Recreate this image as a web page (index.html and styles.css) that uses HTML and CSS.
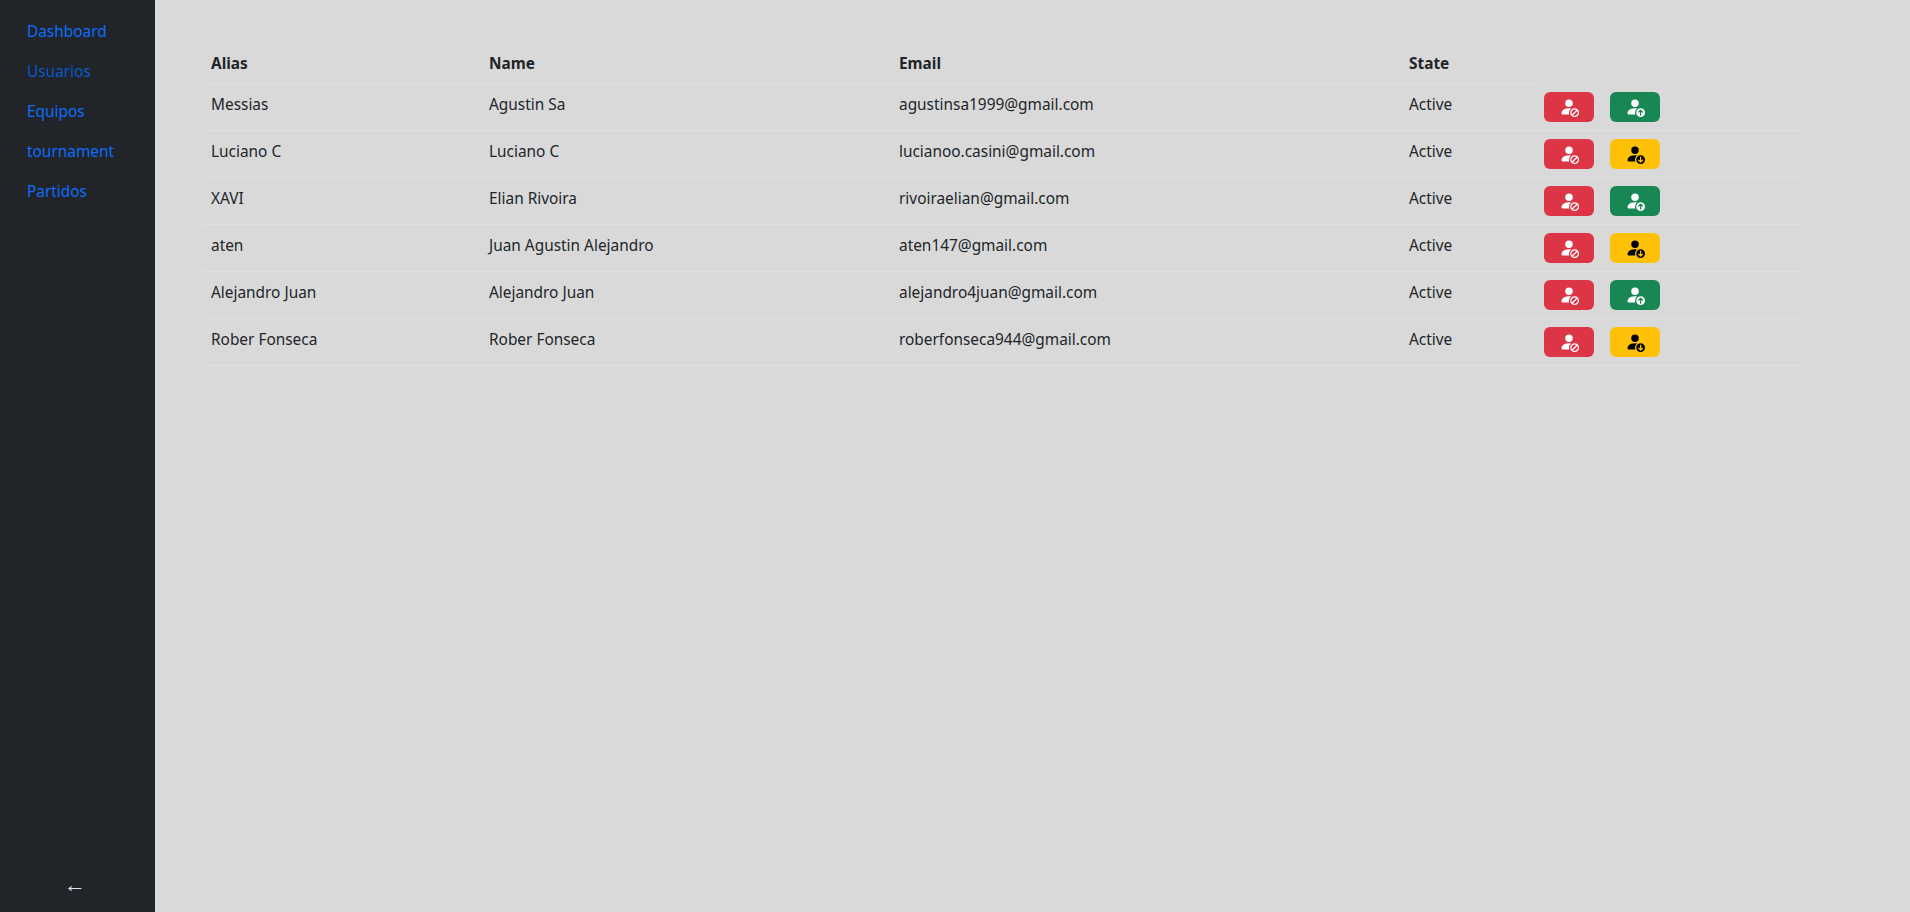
FILE: index.html
```html
<!DOCTYPE html>
<html lang="en">
<head>
<meta charset="UTF-8">
<title>Usuarios</title>
<link rel="stylesheet" href="styles.css">
</head>
<body>
<svg class="icon-defs" xmlns="http://www.w3.org/2000/svg">
  <symbol id="person-slash" viewBox="0 0 16 16">
    <path d="M13.879 10.414a2.501 2.501 0 0 0-3.465 3.465l3.465-3.465Zm.707.707-3.465 3.465a2.501 2.501 0 0 0 3.465-3.465Zm-4.56-1.096a3.5 3.5 0 1 1 4.949 4.95 3.5 3.5 0 0 1-4.95-4.95Z"/>
    <path d="M11 5a3 3 0 1 1-6 0 3 3 0 0 1 6 0Zm-9 8c0 1 1 1 1 1h5.256A4.493 4.493 0 0 1 8 12.5a4.49 4.49 0 0 1 1.544-3.393C9.077 9.038 8.564 9 8 9c-5 0-6 3-6 4Z"/>
  </symbol>
  <symbol id="person-up" viewBox="0 0 16 16">
    <path d="M12.5 16a3.5 3.5 0 1 0 0-7 3.5 3.5 0 0 0 0 7Zm.354-5.854 1.5 1.5a.5.5 0 0 1-.708.708L13 11.707V14.5a.5.5 0 0 1-1 0v-2.793l-.646.647a.5.5 0 0 1-.708-.708l1.5-1.5a.5.5 0 0 1 .708 0Z"/>
    <path d="M11 5a3 3 0 1 1-6 0 3 3 0 0 1 6 0Zm-9 8c0 1 1 1 1 1h5.256A4.493 4.493 0 0 1 8 12.5a4.49 4.49 0 0 1 1.544-3.393C9.077 9.038 8.564 9 8 9c-5 0-6 3-6 4Z"/>
  </symbol>
  <symbol id="person-down" viewBox="0 0 16 16">
    <path d="M12.5 9a3.5 3.5 0 1 1 0 7 3.5 3.5 0 0 1 0-7Zm.354 5.854 1.5-1.5a.5.5 0 0 0-.708-.708l-.646.647V10.5a.5.5 0 0 0-1 0v2.793l-.646-.647a.5.5 0 0 0-.708.708l1.5 1.5a.5.5 0 0 0 .708 0Z"/>
    <path d="M11 5a3 3 0 1 1-6 0 3 3 0 0 1 6 0Zm-9 8c0 1 1 1 1 1h5.256A4.493 4.493 0 0 1 8 12.5a4.49 4.49 0 0 1 1.544-3.393C9.077 9.038 8.564 9 8 9c-5 0-6 3-6 4Z"/>
  </symbol>
</svg>

<div class="layout">
  <nav class="sidebar">
    <ul class="nav-list">
      <li><a class="nav-link" href="#">Dashboard</a></li>
      <li><a class="nav-link hover" href="#">Usuarios</a></li>
      <li><a class="nav-link" href="#">Equipos</a></li>
      <li><a class="nav-link" href="#">tournament</a></li>
      <li><a class="nav-link" href="#">Partidos</a></li>
    </ul>
    <div class="collapse-arrow">←</div>
  </nav>

  <main class="content">
    <table class="users">
      <colgroup>
        <col class="col-alias">
        <col class="col-name">
        <col class="col-email">
        <col class="col-state">
        <col class="col-actions">
      </colgroup>
      <thead>
        <tr>
          <th>Alias</th>
          <th>Name</th>
          <th>Email</th>
          <th>State</th>
        </tr>
      </thead>
      <tbody>
        <tr>
          <td>Messias</td>
          <td>Agustin Sa</td>
          <td>agustinsa1999@gmail.com</td>
          <td>Active</td>
          <td class="actions">
            <button class="btn btn-danger"><svg class="icon"><use href="#person-slash"/></svg></button>
            <button class="btn btn-success"><svg class="icon"><use href="#person-up"/></svg></button>
          </td>
        </tr>
        <tr>
          <td>Luciano C</td>
          <td>Luciano C</td>
          <td>lucianoo.casini@gmail.com</td>
          <td>Active</td>
          <td class="actions">
            <button class="btn btn-danger"><svg class="icon"><use href="#person-slash"/></svg></button>
            <button class="btn btn-warning"><svg class="icon"><use href="#person-down"/></svg></button>
          </td>
        </tr>
        <tr>
          <td>XAVI</td>
          <td>Elian Rivoira</td>
          <td>rivoiraelian@gmail.com</td>
          <td>Active</td>
          <td class="actions">
            <button class="btn btn-danger"><svg class="icon"><use href="#person-slash"/></svg></button>
            <button class="btn btn-success"><svg class="icon"><use href="#person-up"/></svg></button>
          </td>
        </tr>
        <tr>
          <td>aten</td>
          <td>Juan Agustin Alejandro</td>
          <td>aten147@gmail.com</td>
          <td>Active</td>
          <td class="actions">
            <button class="btn btn-danger"><svg class="icon"><use href="#person-slash"/></svg></button>
            <button class="btn btn-warning"><svg class="icon"><use href="#person-down"/></svg></button>
          </td>
        </tr>
        <tr>
          <td>Alejandro Juan</td>
          <td>Alejandro Juan</td>
          <td>alejandro4juan@gmail.com</td>
          <td>Active</td>
          <td class="actions">
            <button class="btn btn-danger"><svg class="icon"><use href="#person-slash"/></svg></button>
            <button class="btn btn-success"><svg class="icon"><use href="#person-up"/></svg></button>
          </td>
        </tr>
        <tr>
          <td>Rober Fonseca</td>
          <td>Rober Fonseca</td>
          <td>roberfonseca944@gmail.com</td>
          <td>Active</td>
          <td class="actions">
            <button class="btn btn-danger"><svg class="icon"><use href="#person-slash"/></svg></button>
            <button class="btn btn-warning"><svg class="icon"><use href="#person-down"/></svg></button>
          </td>
        </tr>
      </tbody>
    </table>
  </main>
</div>
</body>
</html>
```

FILE: styles.css
```css
html, body{
  padding:0;
  margin:0;
  height:100%;
  background:#d9d9d9;
  color:#212529;
  font-family:"Noto Sans", "Open Sans", sans-serif;
  font-size:15.4px;
  line-height:24px;
}

.icon-defs{
  display:none;
}

.layout{
  display:flex;
  min-height:100vh;
}

/* sidebar */
.sidebar{
  width:155px;
  flex-shrink:0;
  background:#212529;
  display:flex;
  flex-direction:column;
  justify-content:space-between;
  padding:11px;
  box-sizing:border-box;
}

.nav-list{
  list-style:none;
  margin:0;
  padding:0;
}

.nav-link{
  display:block;
  padding:9px 16px 7px;
  color:#0d6efd;
  text-decoration:none;
}

.nav-link.hover{
  color:#0a58ca;
}

.collapse-arrow{
  color:#dee2e6;
  text-align:center;
  font-family:"Liberation Sans", sans-serif;
  font-size:22px;
  padding-right:5px;
  margin-bottom:4px;
}

/* table */
.content{
  flex:1;
  padding:43px 48px;
}

.users{
  width:1600px;
  table-layout:fixed;
  border-collapse:collapse;
}

.col-alias{width:278px;}
.col-name{width:410px;}
.col-email{width:510px;}
.col-state{width:135px;}
.col-actions{width:267px;}

.users th, .users td{
  padding:9px 8px 7px;
  text-align:left;
  vertical-align:top;
  border-bottom:1px solid #dee2e6;
}

.users th{
  font-weight:700;
}

.users td.actions{
  padding:8px;
  display:flex;
  gap:16px;
}

/* buttons */
.btn{
  width:50px;
  height:30px;
  padding:0;
  border:0;
  border-radius:6px;
  display:flex;
  align-items:center;
  justify-content:center;
}

.btn-danger{
  background:#dc3545;
  color:#fff;
}

.btn-success{
  background:#198754;
  color:#fff;
}

.btn-warning{
  background:#ffc107;
  color:#000;
}

.icon{
  width:20px;
  height:20px;
  fill:currentColor;
}
```
